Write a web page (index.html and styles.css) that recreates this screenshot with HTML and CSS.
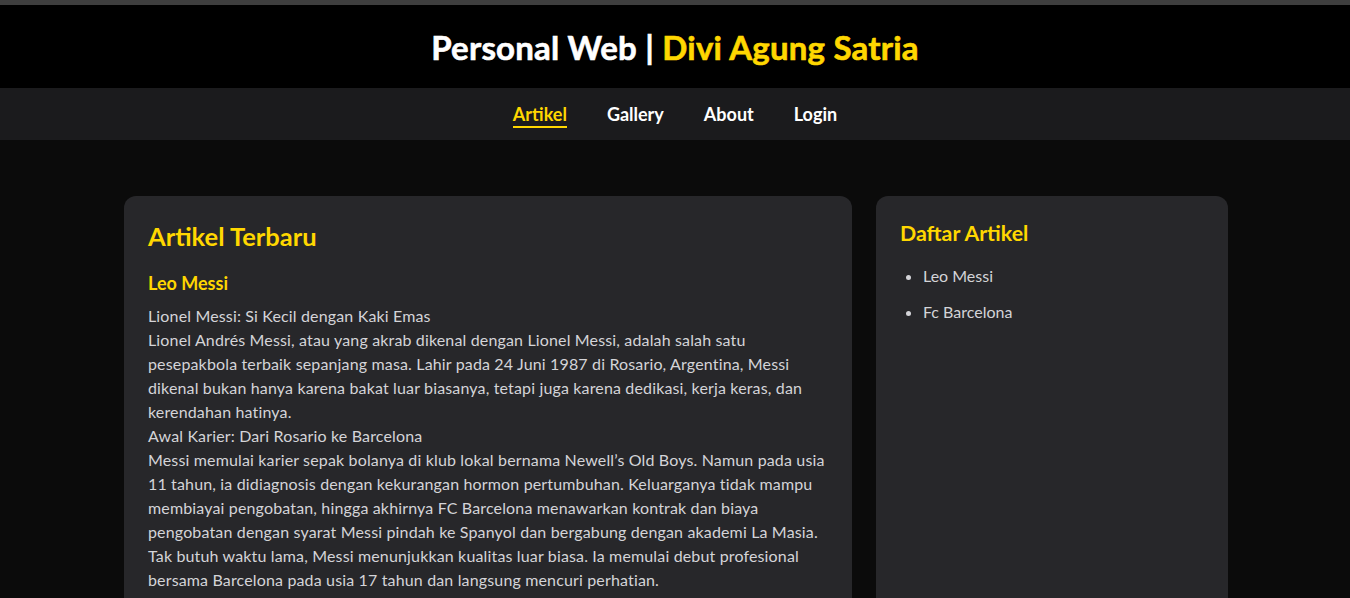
FILE: index.html
```html
<!DOCTYPE html>
<html lang="id">
<head>
<meta charset="utf-8">
<title>Personal Web | Divi Agung Satria</title>
<link rel="stylesheet" href="styles.css">
</head>
<body>
<header class="site-header">
  <h1 class="site-title">Personal Web | <span class="accent">Divi Agung Satria</span></h1>
</header>
<nav class="site-nav">
  <a class="nav-link active" href="#">Artikel</a>
  <a class="nav-link" href="#">Gallery</a>
  <a class="nav-link" href="#">About</a>
  <a class="nav-link" href="#">Login</a>
</nav>
<main class="layout">
  <section class="card article-card">
    <h2 class="card-title">Artikel Terbaru</h2>
    <article class="article">
      <h3 class="article-title">Leo Messi</h3>
      <p class="article-body">Lionel Messi: Si Kecil dengan Kaki Emas<br>
Lionel Andrés Messi, atau yang akrab dikenal dengan Lionel Messi, adalah salah satu pesepakbola terbaik sepanjang masa. Lahir pada 24 Juni 1987 di Rosario, Argentina, Messi dikenal bukan hanya karena bakat luar biasanya, tetapi juga karena dedikasi, kerja keras, dan kerendahan hatinya.<br>
Awal Karier: Dari Rosario ke Barcelona<br>
Messi memulai karier sepak bolanya di klub lokal bernama Newell’s Old Boys. Namun pada usia 11 tahun, ia didiagnosis dengan kekurangan hormon pertumbuhan. Keluarganya tidak mampu membiayai pengobatan, hingga akhirnya FC Barcelona menawarkan kontrak dan biaya pengobatan dengan syarat Messi pindah ke Spanyol dan bergabung dengan akademi La Masia. Tak butuh waktu lama, Messi menunjukkan kualitas luar biasa. Ia memulai debut profesional bersama Barcelona pada usia 17 tahun dan langsung mencuri perhatian.<br>
Puncak Karier Bersama Barcelona<br>
Bersama Barcelona, Messi meraih berbagai gelar bergengsi, termasuk Liga Champions, La Liga, dan Copa del Rey. Ia juga memecahkan banyak rekor dan meraih Ballon d’Or berkali-kali.</p>
    </article>
  </section>
  <aside class="card sidebar">
    <h3 class="sidebar-title">Daftar Artikel</h3>
    <ul class="article-list">
      <li>Leo Messi</li>
      <li>Fc Barcelona</li>
    </ul>
  </aside>
</main>
</body>
</html>
```

FILE: styles.css
```css
* { box-sizing: border-box; }

html, body {
  margin: 0;
  padding: 0;
}

body {
  background: #0b0b0b;
  color: #d4d4d8;
  font-family: Lato, "Noto Sans", "Liberation Sans", sans-serif;
  border-top: 5px solid #3e3e3e;
}

.site-header {
  background: #000;
  height: 83px;
  display: flex;
  align-items: center;
  justify-content: center;
}

.site-title {
  margin: 0;
  font-size: 33px;
  font-weight: 700;
  color: #fff;
  letter-spacing: 0.2px;
  -webkit-text-stroke: 0.6px currentColor;
}

.accent { color: #ffd700; }

.site-nav {
  background: #1b1b1d;
  height: 52px;
  display: flex;
  align-items: center;
  justify-content: center;
  gap: 40px;
}

.nav-link {
  color: #fff;
  text-decoration: none;
  font-size: 18px;
  font-weight: 700;
  line-height: 22px;
  padding: 3px 0 1px;
  border-bottom: 2px solid transparent;
}

.nav-link.active {
  color: #ffd700;
  border-bottom-color: #ffd700;
}

.layout {
  width: 1104px;
  margin: 56px 0 0 calc(50% - 551px);
  display: grid;
  grid-template-columns: 728px 1fr;
  gap: 24px;
}

.card {
  background: #27272a;
  border-radius: 12px;
  padding: 24px;
}

.card-title {
  margin: 0;
  color: #ffd700;
  font-size: 25.5px;
  line-height: 32px;
  font-weight: 700;
}

.article-title {
  margin: 19px 0 0;
  color: #ffd700;
  font-size: 18px;
  line-height: 24px;
  font-weight: 700;
}

.article-body {
  margin: 9px 0 0;
  font-size: 16px;
  line-height: 24px;
  letter-spacing: 0.15px;
}

.sidebar-title {
  margin: 0;
  color: #ffd700;
  font-size: 21.3px;
  line-height: 27px;
  font-weight: 700;
}

.article-list {
  margin: 17px 0 0;
  padding-left: 23px;
  font-size: 16px;
  line-height: 24px;
}

.article-list li { margin-bottom: 12px; }
```
